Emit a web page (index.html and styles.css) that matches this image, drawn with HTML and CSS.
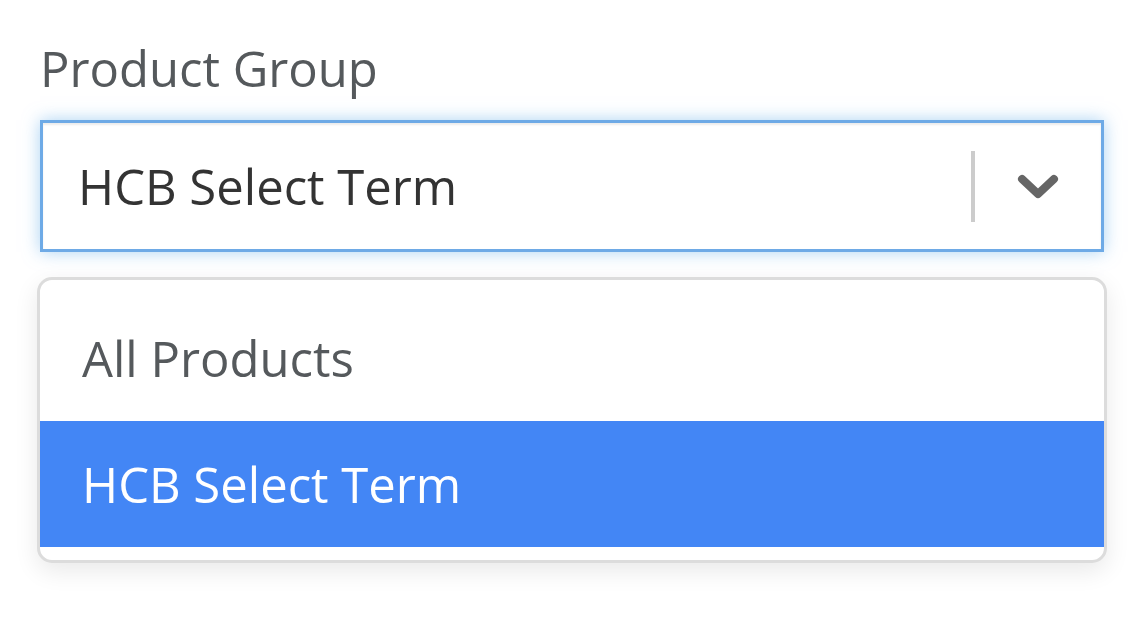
FILE: index.html
```html
<!DOCTYPE html>
<html lang="en">
<head>
<meta charset="utf-8">
<title>Product Group</title>
<link rel="stylesheet" href="styles.css">
</head>
<body>
<div class="field">
  <label class="field-label">Product Group</label>
  <div class="select">
    <div class="select-value">HCB Select Term</div>
    <div class="select-indicators">
      <span class="select-sep"></span>
      <span class="select-arrow">
        <svg width="44" height="30" viewBox="0 0 44 30"><polyline points="5,7 21,22 37,7" fill="none" stroke="#666" stroke-width="8" stroke-linecap="round" stroke-linejoin="round"/></svg>
      </span>
    </div>
  </div>
  <ul class="menu">
    <li class="menu-item">All Products</li>
    <li class="menu-item is-selected">HCB Select Term</li>
  </ul>
</div>
</body>
</html>
```

FILE: styles.css
```css
html, body {
  margin: 0;
  padding: 0;
  background: #fff;
}

body {
  font-family: "Open Sans", "Liberation Sans", sans-serif;
  width: 1148px;
  height: 620px;
  overflow: hidden;
}

.field {
  padding: 38px 0 0 40px;
  width: 1064px;
}

.field-label {
  display: block;
  font-size: 49px;
  line-height: 60px;
  color: #55595c;
  margin-bottom: 22px;
}

.select {
  box-sizing: border-box;
  height: 132px;
  width: 1064px;
  border: 3px solid #6eaae6;
  background: #fff;
  display: flex;
  align-items: center;
  box-shadow: inset 0 2px 2px rgba(0, 0, 0, 0.075), 0 0 16px rgba(102, 175, 233, 0.55);
}

.select-value {
  flex: 1;
  padding-left: 35px;
  font-size: 49px;
  line-height: 60px;
  color: #333;
}

.select-indicators {
  display: flex;
  align-items: center;
  height: 100%;
}

.select-sep {
  width: 4px;
  height: 71px;
  background: #cccccc;
}

.select-arrow {
  width: 126px;
  display: flex;
  justify-content: center;
  align-items: center;
  padding-top: 2px;
}

.select-arrow svg {
  display: block;
  margin-left: 2px;
}

.menu {
  list-style: none;
  margin: 25px 0 0 -3px;
  padding: 15px 0 13px;
  width: 1064px;
  border: 3px solid #dcdcdc;
  border-radius: 15px;
  background: #fff;
  box-shadow: 0 8px 24px rgba(0, 0, 0, 0.09);
}

.menu-item {
  height: 126px;
  line-height: 126px;
  padding-left: 42px;
  font-size: 49px;
  color: #55595c;
}

.menu-item.is-selected {
  background: #4386f5;
  color: #fff;
}
```
